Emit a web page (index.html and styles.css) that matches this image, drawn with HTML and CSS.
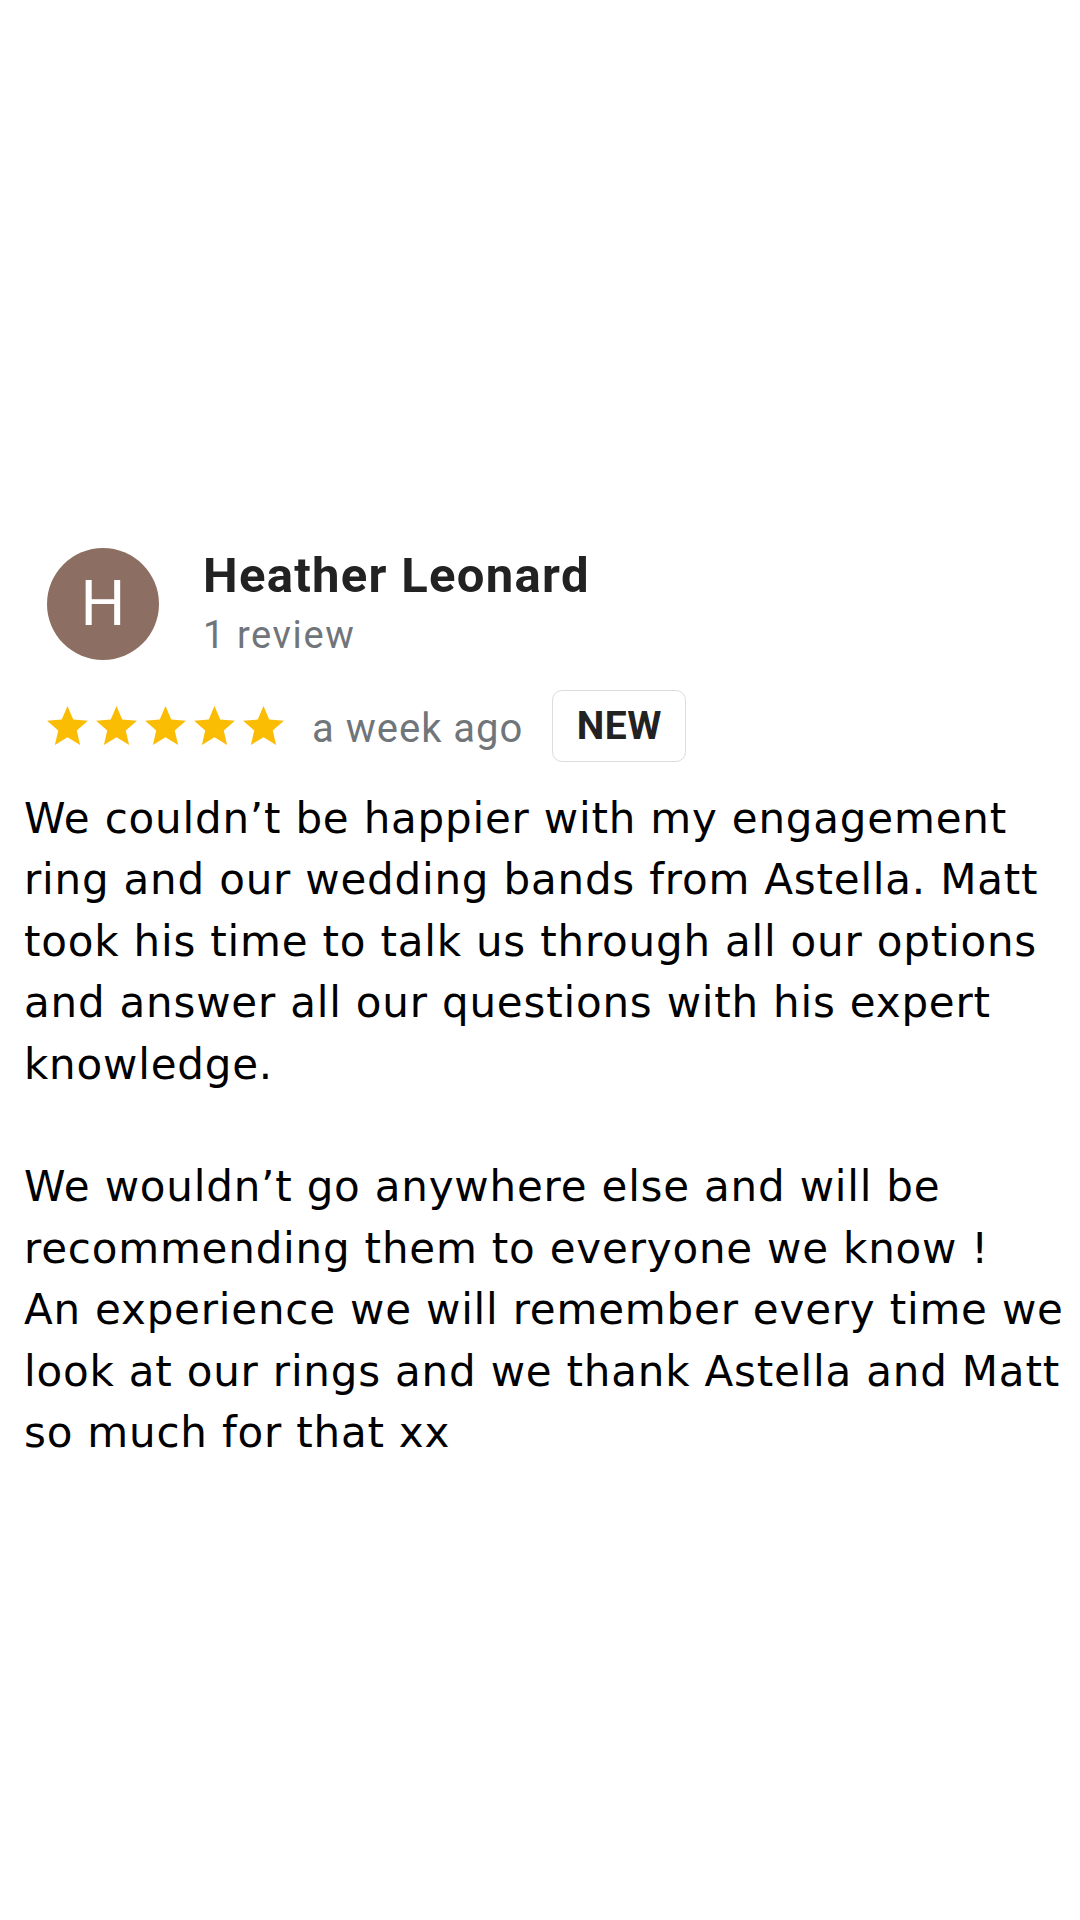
FILE: index.html
```html
<!DOCTYPE html>
<html lang="en">
<head>
<meta charset="utf-8">
<title>Review</title>
<link rel="stylesheet" href="styles.css">
</head>
<body>
<main class="review">
  <header class="head">
    <div class="avatar">H</div>
    <div class="who">
      <div class="name">Heather Leonard</div>
      <div class="count">1 review</div>
    </div>
  </header>
  <div class="meta">
    <div class="stars">
      <svg viewBox="0 0 24 24"><path d="M12 17.27L18.18 21l-1.64-7.03L22 9.24l-7.19-.61L12 2 9.19 8.63 2 9.24l5.46 4.73L5.82 21z"/></svg>
      <svg viewBox="0 0 24 24"><path d="M12 17.27L18.18 21l-1.64-7.03L22 9.24l-7.19-.61L12 2 9.19 8.63 2 9.24l5.46 4.73L5.82 21z"/></svg>
      <svg viewBox="0 0 24 24"><path d="M12 17.27L18.18 21l-1.64-7.03L22 9.24l-7.19-.61L12 2 9.19 8.63 2 9.24l5.46 4.73L5.82 21z"/></svg>
      <svg viewBox="0 0 24 24"><path d="M12 17.27L18.18 21l-1.64-7.03L22 9.24l-7.19-.61L12 2 9.19 8.63 2 9.24l5.46 4.73L5.82 21z"/></svg>
      <svg viewBox="0 0 24 24"><path d="M12 17.27L18.18 21l-1.64-7.03L22 9.24l-7.19-.61L12 2 9.19 8.63 2 9.24l5.46 4.73L5.82 21z"/></svg>
    </div>
    <span class="when">a week ago</span>
    <span class="badge">NEW</span>
  </div>
  <div class="text">
    <p>We couldn’t be happier with my engagement ring and our wedding bands from Astella. Matt took his time to talk us through all our options and answer all our questions with his expert knowledge.</p>
    <p>We wouldn’t go anywhere else and will be recommending them to everyone we know !<br>An experience we will remember every time we look at our rings and we thank Astella and Matt so much for that xx</p>
  </div>
</main>
</body>
</html>
```

FILE: styles.css
```css
html, body {
  margin: 0;
  padding: 0;
  background: #ffffff;
}

body {
  width: 1080px;
  min-height: 1920px;
}

.review {
  padding-top: 548px;
}

.head {
  display: flex;
  align-items: flex-start;
  gap: 44px;
  margin-left: 47px;
}

.avatar {
  width: 112px;
  height: 112px;
  border-radius: 50%;
  background: #8d6e63;
  color: #ffffff;
  font-family: Roboto, "Liberation Sans", sans-serif;
  font-weight: 400;
  font-size: 63px;
  line-height: 112px;
  text-align: center;
  flex: none;
}

.who {
  display: flex;
  flex-direction: column;
  margin-top: -1px;
}

.name {
  font-family: Roboto, "Liberation Sans", sans-serif;
  font-weight: 700;
  font-size: 49px;
  line-height: 58px;
  letter-spacing: 1.3px;
  color: #222222;
}

.count {
  font-family: Roboto, "Liberation Sans", sans-serif;
  font-weight: 400;
  font-size: 38px;
  line-height: 46px;
  letter-spacing: 1.6px;
  color: #70757a;
  margin-top: 7px;
}

.meta {
  display: flex;
  align-items: center;
  height: 72px;
  margin-top: 30px;
  padding-left: 43px;
}

.stars {
  display: flex;
}

.stars svg {
  width: 49px;
  height: 49px;
  display: block;
  fill: #fbbc04;
}

.when {
  font-family: Roboto, "Liberation Sans", sans-serif;
  font-weight: 400;
  font-size: 40px;
  line-height: 48px;
  letter-spacing: 1px;
  color: #70757a;
  margin-left: 24px;
  padding-top: 6px;
}

.badge {
  box-sizing: border-box;
  width: 134px;
  height: 72px;
  margin-left: 29px;
  border: 1.5px solid #dadce0;
  border-radius: 10px;
  display: flex;
  align-items: center;
  justify-content: center;
  font-family: Roboto, "Liberation Sans", sans-serif;
  font-weight: 700;
  font-size: 39px;
  letter-spacing: 0.5px;
  color: #222222;
}

.text {
  margin-top: 26px;
  padding: 0 8px 0 24px;
  font-family: "DejaVu Sans", "Open Sans", sans-serif;
  font-size: 42px;
  line-height: 61.4px;
  letter-spacing: 0.8px;
  color: #000000;
}

.text p {
  margin: 0;
}

.text p + p {
  margin-top: 61.4px;
}
```
